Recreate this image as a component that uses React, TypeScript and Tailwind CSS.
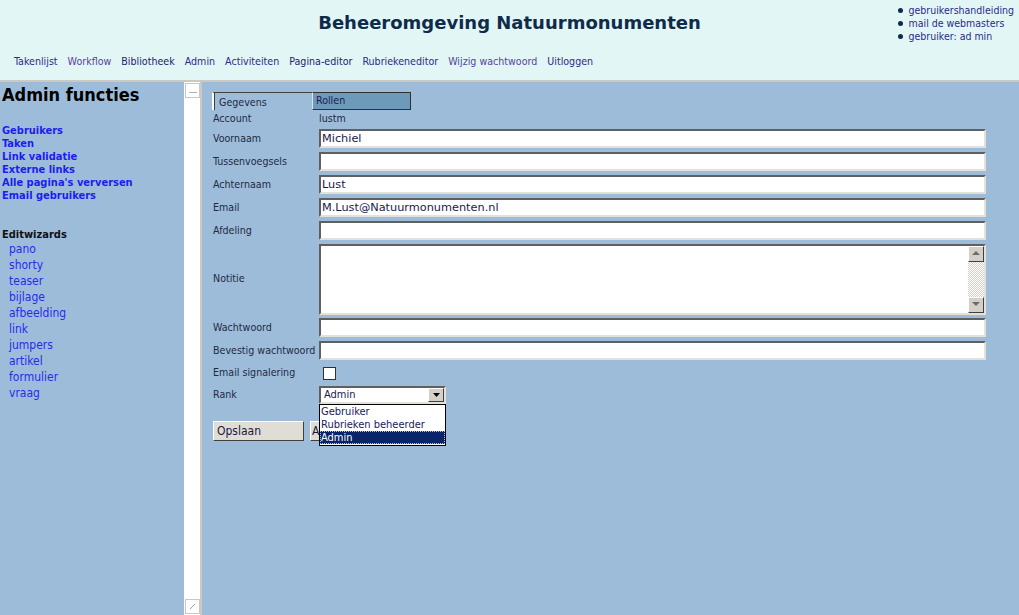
import React from "react";

const tahoma = { fontFamily: "'DejaVu Sans Condensed', 'Liberation Sans', sans-serif" };

function Input({ value = "" }: { value?: string }) {
  return (
    <div className="h-[19px] w-[667px] border-2 border-t-[#5f5f5f] border-l-[#5f5f5f] border-b-[#e4e1da] border-r-[#e4e1da] bg-white flex items-center pl-[1px] text-[11.3px] text-[#1a1a4a] font-['DejaVu_Sans',sans-serif] leading-none">
      {value}
    </div>
  );
}

function Row({ label, h, children }: { label: string; h: string; children?: React.ReactNode }) {
  return (
    <div className={`flex items-center ${h}`}>
      <div className="w-[106px] shrink-0 text-[10.6px] text-[#1e2a44] whitespace-nowrap">{label}</div>
      {children}
    </div>
  );
}

const nav = [
  ["Takenlijst", "#2b2b86"],
  ["Workflow", "#55449a"],
  ["Bibliotheek", "#22226e"],
  ["Admin", "#2b2b86"],
  ["Activiteiten", "#2b2b86"],
  ["Pagina-editor", "#22226e"],
  ["Rubriekeneditor", "#2b2b86"],
  ["Wijzig wachtwoord", "#55449a"],
  ["Uitloggen", "#2b2b86"],
];

const wizards = ["pano", "shorty", "teaser", "bijlage", "afbeelding", "link", "jumpers", "artikel", "formulier", "vraag"];
const adminLinks = ["Gebruikers", "Taken", "Link validatie", "Externe links", "Alle pagina's verversen", "Email gebruikers"];

export default function App() {
  return (
    <div className="w-[1019px] h-[615px] flex flex-col overflow-hidden bg-[#9dbcd9]" style={tahoma}>
      {/* Header */}
      <div className="h-[80px] shrink-0 bg-[#e3f6f6] grid grid-cols-[1fr_auto_1fr] grid-rows-[auto_1fr]">
        <div />
        <div className="pt-[9px] text-center font-['DejaVu_Sans',sans-serif] font-bold text-[18px] text-[#0e2b4a]">
          Beheeromgeving Natuurmonumenten
        </div>
        <div className="flex justify-end pr-[5px] pt-[4px]">
          <ul className="text-[10.5px] leading-[13px] text-[#2b2b86]">
            {["gebruikershandleiding", "mail de webmasters", "gebruiker: ad min"].map((t) => (
              <li key={t} className="flex items-center">
                <span className="w-[5px] h-[5px] rounded-full bg-[#0e2b4a] mr-[6px] inline-block" />
                {t}
              </li>
            ))}
          </ul>
        </div>
        <div className="col-span-3 flex items-end gap-[10px] pl-[14px] pb-[13px] text-[10.6px] leading-none">
          {nav.map(([t, c]) => (
            <span key={t} style={{ color: c }}>{t}</span>
          ))}
        </div>
      </div>
      <div className="h-[2px] shrink-0 bg-[#cfc8c0]" />

      {/* Body */}
      <div className="flex flex-1 min-h-0">
        {/* Left frame */}
        <div className="w-[184px] shrink-0 pl-[2px] pt-[1px]">
          <div className="font-bold text-[18px] text-black leading-[24px]">Admin functies</div>
          <div className="mt-[17px] flex flex-col font-bold text-[11px] leading-[13px] text-[#1c1cf4]">
            {adminLinks.map((l) => (
              <span key={l}>{l}</span>
            ))}
          </div>
          <div className="mt-[26px] font-bold text-[11px] leading-[13px] text-[#111]">Editwizards</div>
          <div className="flex flex-col pl-[7px] text-[12px] leading-[16px] text-[#2a2aee]">
            {wizards.map((w) => (
              <span key={w}>{w}</span>
            ))}
          </div>
        </div>
        {/* Left scrollbar strip */}
        <div className="w-[16px] shrink-0 bg-white flex flex-col justify-between pl-[1px] pt-[1px] pb-[1px]">
          <div className="w-[15px] h-[15px] border border-[#c8c8c8] flex items-center justify-center">
            <div className="w-[8px] h-[1px] bg-[#b0b0b0] mt-[4px]" />
          </div>
          <div className="w-[15px] h-[15px] border border-[#c8c8c8] flex items-center justify-center">
            <svg width="7" height="7" viewBox="0 0 7 7"><path d="M1 6 L6 1" stroke="#a0a0a0" strokeWidth="1" /></svg>
          </div>
        </div>
        <div className="w-[2px] shrink-0 bg-[#cfc8c0]" />

        {/* Main frame */}
        <div className="flex-1 pl-[10px] pt-[10px] relative">
          {/* Tabs */}
          <div className="flex h-[18px] text-[10.6px]">
            <div className="w-[100px] border-t border-t-[#404040] border-l-2 border-l-white shadow-[inset_1px_0_0_#404040] pl-[5px] pt-[4px] text-[#1e2a44] leading-none">
              Gegevens
            </div>
            <div className="w-[99px] bg-[#6e9aba] border border-[#303030] border-l-[#e0e0e0] pl-[3px] pt-[2px] text-[#1a1a5a] leading-none">
              Rollen
            </div>
          </div>
          <div className="pl-[1px]">
            <Row label="Account" h="h-[17px]">
              <span className="text-[10.6px] text-[#1e2a44]">lustm</span>
            </Row>
            <Row label="Voornaam" h="h-[23px]"><Input value="Michiel" /></Row>
            <Row label="Tussenvoegsels" h="h-[23px]"><Input /></Row>
            <Row label="Achternaam" h="h-[23px]"><Input value="Lust" /></Row>
            <Row label="Email" h="h-[23px]"><Input value="M.Lust@Natuurmonumenten.nl" /></Row>
            <Row label="Afdeling" h="h-[23px]"><Input /></Row>
            <Row label="Notitie" h="h-[74px]">
              <div className="h-[71px] w-[667px] border-2 border-t-[#5f5f5f] border-l-[#5f5f5f] border-b-[#e4e1da] border-r-[#e4e1da] bg-white flex justify-end">
                <div className="w-[16px] flex flex-col bg-[repeating-conic-gradient(#d4d0c8_0%_25%,#ffffff_0%_50%)] bg-[length:2px_2px]">
                  <div className="w-[16px] h-[16px] bg-[#d4d0c8] border border-t-white border-l-white border-b-[#404040] border-r-[#404040] flex items-center justify-center">
                    <svg width="8" height="5" viewBox="0 0 8 5"><path d="M4 0 L8 4 L0 4 Z" fill="#6b6b6b" /></svg>
                  </div>
                  <div className="flex-1" />
                  <div className="w-[16px] h-[16px] bg-[#d4d0c8] border border-t-white border-l-white border-b-[#404040] border-r-[#404040] flex items-center justify-center">
                    <svg width="8" height="5" viewBox="0 0 8 5"><path d="M0 0 L8 0 L4 4 Z" fill="#6b6b6b" /></svg>
                  </div>
                </div>
              </div>
            </Row>
            <Row label="Wachtwoord" h="h-[23px]"><Input /></Row>
            <Row label="Bevestig wachtwoord" h="h-[23px]"><Input /></Row>
            <Row label="Email signalering" h="h-[22px]">
              <div className="ml-[4px] w-[13px] h-[13px] bg-white border border-[#303030]" />
            </Row>
            <Row label="Rank" h="h-[21px]">
              <div className="relative">
                <div className="w-[127px] h-[18px] border-2 border-t-[#5f5f5f] border-l-[#5f5f5f] border-b-[#e4e1da] border-r-[#e4e1da] bg-white flex items-center justify-between">
                  <span className="pl-[3px] text-[11px] text-[#1a1a4a] leading-none">Admin</span>
                  <div className="w-[16px] h-[14px] bg-[#d4d0c8] border border-t-white border-l-white border-b-[#404040] border-r-[#404040] flex items-center justify-center">
                    <svg width="7" height="4" viewBox="0 0 7 4"><path d="M0 0 L7 0 L3.5 4 Z" fill="#000" /></svg>
                  </div>
                </div>
                <div className="absolute left-0 top-[18px] w-[127px] h-[42px] bg-white border border-black flex flex-col text-[11px] text-[#1a1a5a] z-10">
                  <div className="h-[13px] pl-[1px] leading-[13px]">Gebruiker</div>
                  <div className="h-[13px] pl-[1px] leading-[13px]">Rubrieken beheerder</div>
                  <div className="h-[13px] pl-[1px] leading-[13px] bg-[#0a246a] text-white outline-1 outline-dotted outline-[#c0c0c0] -outline-offset-1">Admin</div>
                </div>
              </div>
            </Row>
            <div className="flex gap-[6px] mt-[16px]">
              <div className="w-[91px] h-[20px] bg-[#e0ddd6] border border-t-white border-l-white border-b-[#404040] border-r-[#404040] pl-[3px] flex items-center text-[12px] text-[#1a1a3a]">
                Opslaan
              </div>
              <div className="w-[9px] h-[20px] overflow-hidden">
                <div className="w-[91px] h-[20px] bg-[#e0ddd6] border border-t-white border-l-white border-b-[#404040] border-r-[#404040] pl-[1px] flex items-center text-[12px] text-[#1a1a3a]">
                  A
                </div>
              </div>
            </div>
          </div>
        </div>
      </div>
    </div>
  );
}
